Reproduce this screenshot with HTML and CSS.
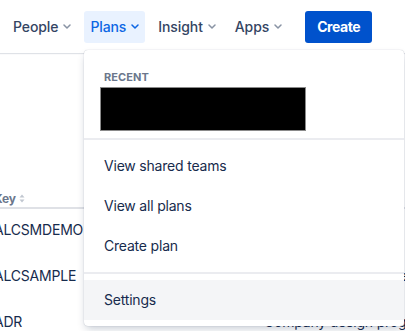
FILE: index.html
```html
<!DOCTYPE html>
<html lang="en">
<head>
<meta charset="utf-8">
<title>Plans menu</title>
<link rel="stylesheet" href="styles.css">
</head>
<body>
<header class="topbar">
  <nav class="nav">
    <button class="nav-item">People<svg class="chev" width="8" height="5" viewBox="0 0 8 5"><path d="M1 1l3 3 3-3"/></svg></button>
    <button class="nav-item is-active">Plans<svg class="chev" width="8" height="5" viewBox="0 0 8 5"><path d="M1 1l3 3 3-3"/></svg></button>
    <button class="nav-item">Insight<svg class="chev" width="8" height="5" viewBox="0 0 8 5"><path d="M1 1l3 3 3-3"/></svg></button>
    <button class="nav-item">Apps<svg class="chev" width="8" height="5" viewBox="0 0 8 5"><path d="M1 1l3 3 3-3"/></svg></button>
  </nav>
  <button class="create">Create</button>
</header>

<main class="content">
  <div class="table">
    <div class="thead">
      <span class="th">Key<svg class="sort" width="6" height="9" viewBox="0 0 6 9"><path d="M3 0.5L5.5 3.5H0.5z"/><path d="M3 8.5L0.5 5.5H5.5z"/></svg></span>
    </div>
    <div class="row"><span class="cell key">ALCSMDEMO</span><span class="cell name">Advanced Roadmaps demo plan</span></div>
    <div class="row"><span class="cell key">ALCSAMPLE</span><span class="cell name">Sample planning project</span></div>
    <div class="row"><span class="cell key">ADR</span><span class="cell name">Company design programme</span></div>
  </div>
</main>

<div class="menu">
  <section class="menu-section recent">
    <h2 class="menu-heading">RECENT</h2>
    <div class="redacted"></div>
  </section>
  <section class="menu-section">
    <a class="menu-item">View shared teams</a>
    <a class="menu-item">View all plans</a>
    <a class="menu-item">Create plan</a>
  </section>
  <section class="menu-section">
    <a class="menu-item is-hover">Settings</a>
  </section>
</div>
</body>
</html>
```

FILE: styles.css
```css
* { box-sizing: border-box; }
html, body { margin: 0; padding: 0; }
body {
  width: 405px;
  height: 331px;
  overflow: hidden;
  background: #fff;
  font-family: Inter, "Liberation Sans", Arial, sans-serif;
  color: #172B4D;
  position: relative;
  letter-spacing: -0.2px;
}

.topbar {
  height: 53px;
  display: flex;
  align-items: center;
  padding-left: 7px;
  box-shadow: 0 1px 1px rgba(9, 30, 66, 0.13);
  position: relative;
  z-index: 1;
  background: #fff;
}
.nav { display: flex; gap: 7px; align-items: center; }
.nav-item {
  height: 32px;
  padding: 0 6px;
  border: 0;
  border-radius: 3px;
  background: transparent;
  font: 500 14px Inter, "Liberation Sans", Arial, sans-serif;
  letter-spacing: -0.1px;
  color: #344563;
  display: flex;
  align-items: center;
  gap: 5px;
}
.chev { fill: none; stroke: #8993A4; stroke-width: 1.5; stroke-linecap: round; stroke-linejoin: round; }
.nav-item.is-active { background: #E9F2FF; color: #0C66E4; }
.nav-item.is-active .chev { stroke: #0C66E4; }

.create {
  margin-left: 17px;
  height: 32px;
  padding: 0 12px;
  border: 0;
  border-radius: 3px;
  background: #0052CC;
  color: #fff;
  font: 700 14px Inter, "Liberation Sans", Arial, sans-serif;
  letter-spacing: -0.45px;
}

.content { padding-top: 136px; }
.table { margin-left: -6px; }
.thead {
  display: flex;
  height: 20px;
  border-bottom: 2px solid #DFE1E6;
  padding-top: 1px;
}
.th {
  font-size: 12px;
  line-height: 16px;
  font-weight: 700;
  color: #6B778C;
  display: flex;
  align-items: center;
  gap: 3px;
}
.sort { fill: #C1C7D0; }
.row {
  display: flex;
  height: 46px;
  padding-top: 11px;
  font-size: 14px;
  line-height: 20px;
  color: #172B4D;
}
.cell.key { width: 270px; flex: none; }
.cell.name { white-space: nowrap; }

.menu {
  position: absolute;
  top: 50px;
  left: 84px;
  width: 320px;
  background: #fff;
  border-radius: 4px;
  box-shadow: 0 4px 8px -2px rgba(9, 30, 66, 0.25), 0 0 1px rgba(9, 30, 66, 0.31);
  z-index: 2;
}
.menu-section { padding: 6px 0; }
.menu-section + .menu-section { border-top: 2px solid #EBECF0; }
.recent { padding: 19px 0 7px 16px; }
.menu-heading {
  margin: 0;
  padding-left: 4px;
  font-size: 11px;
  line-height: 16px;
  font-weight: 700;
  color: #6B778C;
  letter-spacing: 0.1px;
}
.redacted {
  margin-top: 2px;
  width: 206px;
  height: 44px;
  background: #000;
  border: 1px solid #8a8a8a;
}
.menu-item {
  display: block;
  height: 40px;
  padding: 10px 20px;
  font-size: 14px;
  line-height: 20px;
  color: #172B4D;
}
.menu-item.is-hover { background: #F4F5F7; }
```
